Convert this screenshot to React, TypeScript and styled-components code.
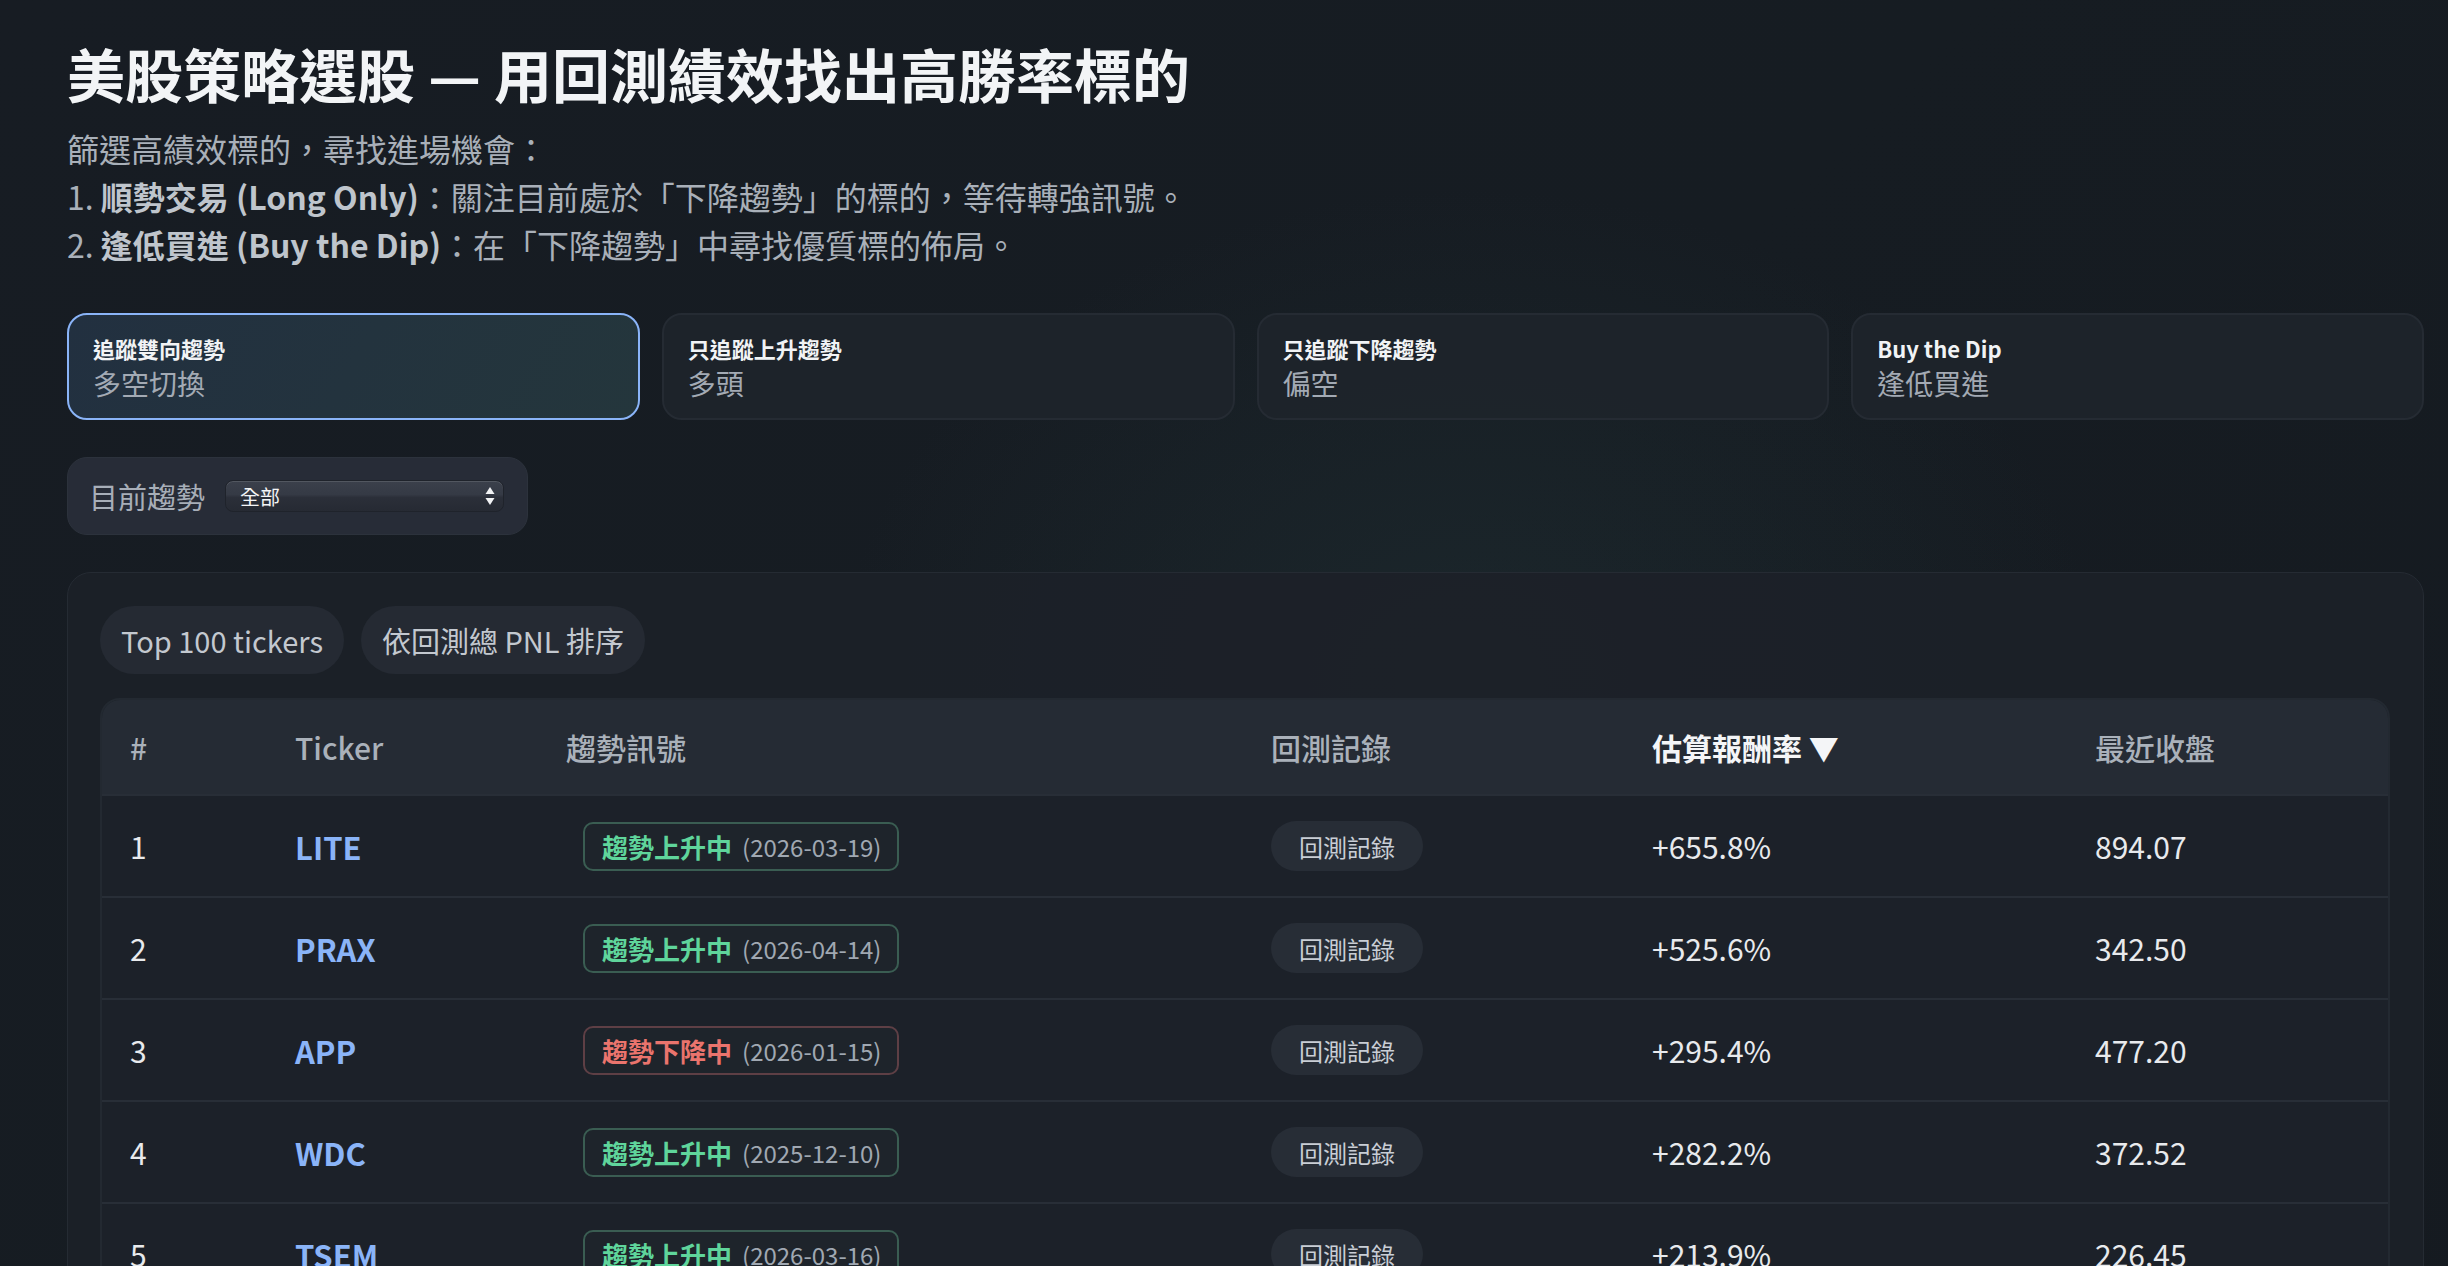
import React from 'react';
import styled, { createGlobalStyle } from 'styled-components';

const GlobalStyle = createGlobalStyle`
  html, body {
    margin: 0;
    padding: 0;
    background: #161b21;
  }
  body {
    font-family: "Noto Sans CJK TC", "Noto Sans", sans-serif;
    color: #e6e8eb;
  }
  * { box-sizing: border-box; }
`;

type Trend = 'up' | 'down';

interface Row {
  rank: number;
  ticker: string;
  trend: Trend;
  date: string;
  ret: string;
  close: string;
}

const rows: Row[] = [
  { rank: 1, ticker: 'LITE', trend: 'up', date: '2026-03-19', ret: '+655.8%', close: '894.07' },
  { rank: 2, ticker: 'PRAX', trend: 'up', date: '2026-04-14', ret: '+525.6%', close: '342.50' },
  { rank: 3, ticker: 'APP', trend: 'down', date: '2026-01-15', ret: '+295.4%', close: '477.20' },
  { rank: 4, ticker: 'WDC', trend: 'up', date: '2025-12-10', ret: '+282.2%', close: '372.52' },
  { rank: 5, ticker: 'TSEM', trend: 'up', date: '2026-03-16', ret: '+213.9%', close: '226.45' },
  { rank: 6, ticker: 'MU', trend: 'up', date: '2026-02-20', ret: '+198.1%', close: '131.44' },
];

const modes = [
  { label: '追蹤雙向趨勢', value: '多空切換', active: true },
  { label: '只追蹤上升趨勢', value: '多頭', active: false },
  { label: '只追蹤下降趨勢', value: '偏空', active: false },
  { label: 'Buy the Dip', value: '逢低買進', active: false },
];

const App: React.FC = () => {
  return (
    <Page>
      <GlobalStyle />
      <Title>美股策略選股 — 用回測績效找出高勝率標的</Title>
      <Intro>
        篩選高績效標的，尋找進場機會：
        <br />
        1. <strong>順勢交易 (Long Only)</strong>：關注目前處於「下降趨勢」的標的，等待轉強訊號。
        <br />
        2. <strong>逢低買進 (Buy the Dip)</strong>：在「下降趨勢」中尋找優質標的佈局。
      </Intro>

      <ModeGrid>
        {modes.map((m) => (
          <ModeCard key={m.label} $active={m.active}>
            <ModeLabel>{m.label}</ModeLabel>
            <ModeValue>{m.value}</ModeValue>
          </ModeCard>
        ))}
      </ModeGrid>

      <FilterBox>
        <FilterLabel>目前趨勢</FilterLabel>
        <SelectWrap>
          <Select defaultValue="all">
            <option value="all">全部</option>
            <option value="up">趨勢上升中</option>
            <option value="down">趨勢下降中</option>
          </Select>
          <SelectArrows>
            <svg width="10" height="20" viewBox="0 0 10 20">
              <path d="M5 1 L9.5 8 H0.5 Z" fill="#f1f2f4" />
              <path d="M5 19 L9.5 12 H0.5 Z" fill="#f1f2f4" />
            </svg>
          </SelectArrows>
        </SelectWrap>
      </FilterBox>

      <Panel>
        <ChipRow>
          <Chip>Top 100 tickers</Chip>
          <Chip>依回測總 PNL 排序</Chip>
        </ChipRow>

        <TableWrap>
          <Table>
            <colgroup>
              <col style={{ width: 165 }} />
              <col style={{ width: 271 }} />
              <col style={{ width: 705 }} />
              <col style={{ width: 381 }} />
              <col style={{ width: 443 }} />
              <col style={{ width: 325 }} />
            </colgroup>
            <thead>
              <tr>
                <Th>#</Th>
                <Th>Ticker</Th>
                <Th>趨勢訊號</Th>
                <Th>回測記錄</Th>
                <Th $sorted>估算報酬率 ▼</Th>
                <Th>最近收盤</Th>
              </tr>
            </thead>
            <tbody>
              {rows.map((r) => (
                <Tr key={r.ticker}>
                  <Td>{r.rank}</Td>
                  <Td>
                    <TickerLink>{r.ticker}</TickerLink>
                  </Td>
                  <Td>
                    <TrendBadge $trend={r.trend}>
                      <TrendText $trend={r.trend}>
                        {r.trend === 'up' ? '趨勢上升中' : '趨勢下降中'}
                      </TrendText>
                      <TrendDate>({r.date})</TrendDate>
                    </TrendBadge>
                  </Td>
                  <Td>
                    <HistoryButton>回測記錄</HistoryButton>
                  </Td>
                  <Td>{r.ret}</Td>
                  <Td>{r.close}</Td>
                </Tr>
              ))}
            </tbody>
          </Table>
        </TableWrap>
      </Panel>
    </Page>
  );
};

const Page = styled.div`
  min-height: 100vh;
  padding: 37px 24px 60px 67px;
  background:
    radial-gradient(ellipse 900px 700px at 60% 45%, rgba(34, 52, 56, 0.45), transparent 70%),
    linear-gradient(135deg, #171c23 0%, #161c22 50%, #151a20 100%);
`;

const Title = styled.h1`
  margin: 0;
  font-size: 58px;
  line-height: 72px;
  font-weight: 700;
  color: #f2f4f6;
  letter-spacing: 0;
`;

const Intro = styled.p`
  margin: 15px 0 0;
  font-size: 32px;
  line-height: 48px;
  color: #a9b0b9;

  strong {
    font-weight: 700;
    color: #bfc5cc;
  }
`;

const ModeGrid = styled.div`
  display: grid;
  grid-template-columns: repeat(4, 1fr);
  gap: 22px;
  margin-top: 45px;
`;

const ModeCard = styled.div<{ $active: boolean }>`
  height: 107px;
  padding: 18px 24px 16px;
  border-radius: 20px;
  border: 2px solid ${(p) => (p.$active ? '#8ab4f8' : '#252b33')};
  background: ${(p) =>
    p.$active
      ? 'linear-gradient(120deg, #223040 0%, #24363c 100%)'
      : 'rgba(30, 36, 43, 0.85)'};
  display: flex;
  flex-direction: column;
`;

const ModeLabel = styled.div`
  font-size: 22px;
  line-height: 31px;
  font-weight: 700;
  color: #f1f3f5;
`;

const ModeValue = styled.div`
  font-size: 28px;
  line-height: 39px;
  color: #a3aab4;
`;

const FilterBox = styled.div`
  display: inline-flex;
  align-items: center;
  gap: 20px;
  width: 461px;
  height: 78px;
  margin-top: 37px;
  padding: 0 23px 0 21px;
  border-radius: 20px;
  background: #272c37;
  border: 1px solid #2c323c;
`;

const FilterLabel = styled.span`
  font-size: 29px;
  color: #a7aeb8;
  white-space: nowrap;
`;

const SelectWrap = styled.div`
  position: relative;
  flex: 1;
  height: 32px;
`;

const Select = styled.select`
  appearance: none;
  width: 100%;
  height: 100%;
  border: 1px solid #1f232b;
  border-radius: 8px;
  padding: 0 30px 0 14px;
  font-family: inherit;
  font-size: 20px;
  color: #f3f4f6;
  background: linear-gradient(180deg, #3b404b 0%, #353a45 45%, #2b2f39 55%, #262a33 100%);
  box-shadow: inset 0 1px 0 rgba(255, 255, 255, 0.12);
  outline: none;
`;

const SelectArrows = styled.span`
  position: absolute;
  right: 9px;
  top: 50%;
  transform: translateY(-50%);
  display: flex;
  pointer-events: none;
`;

const Panel = styled.section`
  margin-top: 37px;
  padding: 33px 33px 40px 32px;
  border-radius: 24px;
  border: 1px solid #252b33;
  background: rgba(28, 33, 40, 0.92);
`;

const ChipRow = styled.div`
  display: flex;
  gap: 17px;
`;

const Chip = styled.span`
  display: inline-flex;
  align-items: center;
  height: 68px;
  padding: 0 21px;
  border-radius: 34px;
  background: #252a33;
  font-size: 29px;
  color: #c3c8cf;
`;

const TableWrap = styled.div`
  margin-top: 24px;
  border: 2px solid #232931;
  border-radius: 20px;
  overflow: hidden;
`;

const Table = styled.table`
  width: 100%;
  border-collapse: collapse;
  table-layout: fixed;
`;

const Th = styled.th<{ $sorted?: boolean }>`
  height: 95px;
  padding: 0 0 0 28px;
  text-align: left;
  background: #252b34;
  font-size: 30px;
  font-weight: ${(p) => (p.$sorted ? 700 : 500)};
  color: ${(p) => (p.$sorted ? '#f4f5f7' : '#aab1ba')};
  white-space: nowrap;
`;

const Tr = styled.tr`
  background: #1c2129;
  border-top: 2px solid #282e37;
`;

const Td = styled.td`
  height: 102px;
  padding: 0 0 0 28px;
  font-size: 30px;
  color: #e8eaed;
  white-space: nowrap;
`;

const TickerLink = styled.a`
  color: #8ab4f8;
  font-weight: 600;
  font-size: 31px;
  text-decoration: none;
  cursor: pointer;
`;

const TrendBadge = styled.span<{ $trend: Trend }>`
  display: inline-flex;
  align-items: center;
  gap: 10px;
  height: 49px;
  margin-left: 17px;
  padding: 0 16px 0 17px;
  border-radius: 10px;
  border: 2px solid ${(p) => (p.$trend === 'up' ? '#3a5d52' : '#5e3f45')};
  background: #1e242b;
`;

const TrendText = styled.span<{ $trend: Trend }>`
  font-size: 26px;
  font-weight: 700;
  color: ${(p) => (p.$trend === 'up' ? '#5fd59b' : '#ea746d')};
`;

const TrendDate = styled.span`
  font-size: 24px;
  color: #a0a8b2;
`;

const HistoryButton = styled.button`
  height: 50px;
  padding: 0 28px;
  border: none;
  border-radius: 25px;
  background: #272d36;
  font-family: inherit;
  font-size: 24px;
  color: #c9ced5;
  cursor: pointer;
`;

export default App;
